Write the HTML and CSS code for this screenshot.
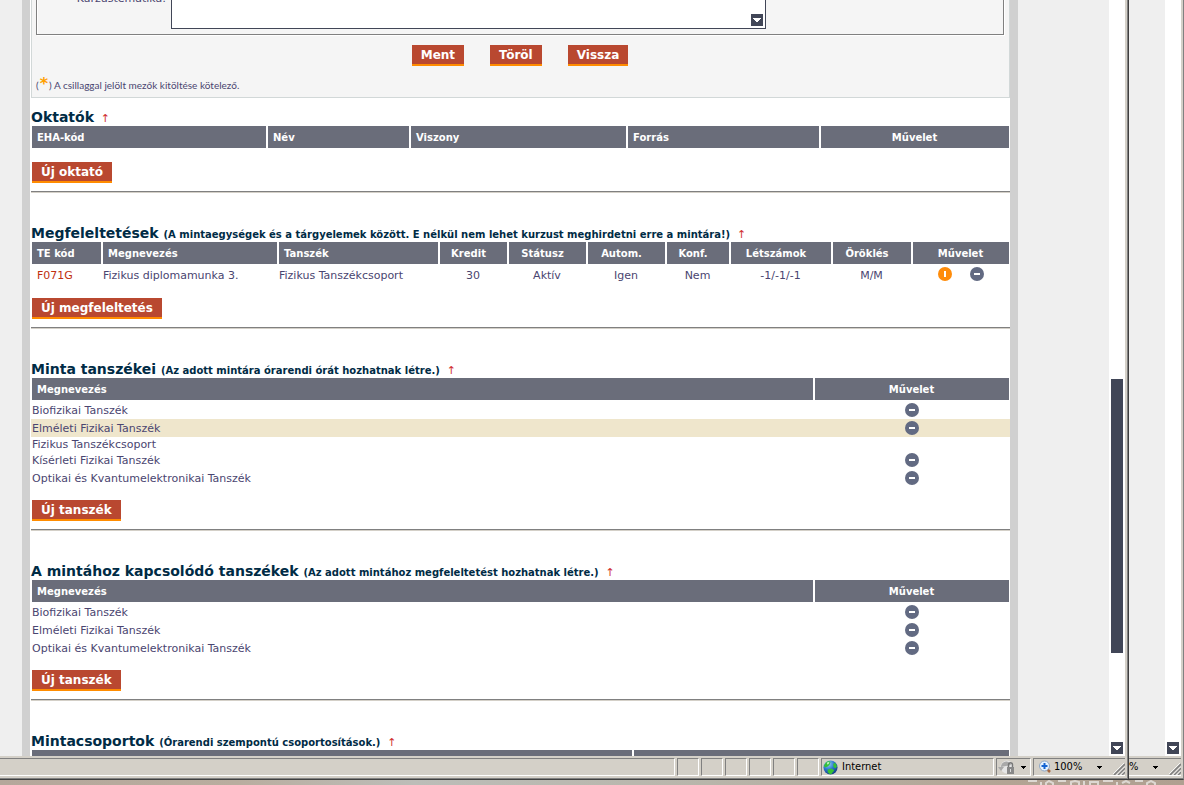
FILE: index.html
```html
<!DOCTYPE html>
<html lang="hu">
<head>
<meta charset="utf-8">
<title>Minta szerkesztése</title>
<link rel="stylesheet" href="styles.css">
</head>
<body>
<svg class="defs" aria-hidden="true">
  <symbol id="minus" viewBox="0 0 14 14"><circle cx="7" cy="7" r="7" fill="#626a82"/><path d="M4 6h6v2H4z" fill="#fff"/></symbol>
  <symbol id="bar" viewBox="0 0 14 14"><circle cx="7" cy="7" r="7" fill="#ff8c0a"/><path d="M6 4h2v6H6z" fill="#fff"/></symbol>
  <symbol id="down" viewBox="0 0 12 12"><path d="M0 0h12v12H0z" fill="#414657"/><path d="M2 4h8v1H9v1H8v1H7v1H5V7H4V6H3V5H2z" fill="#fff"/></symbol>
  <symbol id="caret" viewBox="0 0 5 3"><path d="M0 0h5v1H4v1H3v1H2V2H1V1H0z" fill="#000"/></symbol>
  <symbol id="grip" viewBox="0 0 12 12"><path d="M1 12 12 1M5 12l7-7M9 12l3-3" stroke="#808080" stroke-width="1.6"/><path d="M0 11 11 0M3.500 12 12 3.500M7.500 12 12 7.500" stroke="#fff" stroke-width=".8"/></symbol>
</svg>
<div class="windows">
  <div class="window window-main">
    <div class="view">
      <main class="page">
        <form class="panel">
          <div class="fields">
            <label for="prereq">Kurzustematika:</label>
            <div class="memo">
              <textarea id="prereq"></textarea>
              <svg class="memo-down"><use href="#down"/></svg>
            </div>
          </div>
          <div class="actions">
            <button type="button" class="btn">Ment</button>
            <button type="button" class="btn">Töröl</button>
            <button type="button" class="btn">Vissza</button>
          </div>
          <p class="note">(<span class="star">*</span>) A csillaggal jelölt mezők kitöltése kötelező.</p>
        </form>

        <section>
          <h2>Oktatók <a href="#top">↑</a></h2>
          <table>
            <colgroup><col><col class="w143"><col class="w217"><col class="w193"><col class="w189"></colgroup>
            <thead><tr><th>EHA-kód</th><th>Név</th><th>Viszony</th><th>Forrás</th><th class="op">Művelet</th></tr></thead>
          </table>
          <button type="button" class="btn">Új oktató</button>
        </section>

        <section>
          <h2>Megfeleltetések <small>(A mintaegységek és a tárgyelemek között. E nélkül nem lehet kurzust meghirdetni erre a mintára!)</small> <a href="#top">↑</a></h2>
          <table class="matches">
            <colgroup><col class="w72"><col><col class="w161"><col class="w69"><col class="w79"><col class="w79"><col class="w64"><col class="w102"><col class="w80"><col class="w97"></colgroup>
            <thead><tr><th>TE kód</th><th>Megnevezés</th><th>Tanszék</th><th class="mid">Kredit</th><th class="mid">Státusz</th><th class="mid">Autom.</th><th class="mid">Konf.</th><th class="mid">Létszámok</th><th class="mid">Öröklés</th><th class="op">Művelet</th></tr></thead>
            <tbody><tr><td class="code"><a href="#f071g">F071G</a></td><td>Fizikus diplomamunka 3.</td><td>Fizikus Tanszékcsoport</td><td class="mid">30</td><td class="mid">Aktív</td><td class="mid">Igen</td><td class="mid">Nem</td><td class="mid">-1/-1/-1</td><td class="mid">M/M</td><td class="act"><div class="ops"><button type="button" class="icon" aria-label="Infó"><svg><use href="#bar"/></svg></button><button type="button" class="icon" aria-label="Törlés"><svg><use href="#minus"/></svg></button></div></td></tr></tbody>
          </table>
          <button type="button" class="btn">Új megfeleltetés</button>
        </section>

        <section>
          <h2>Minta tanszékei <small>(Az adott mintára órarendi órát hozhatnak létre.)</small> <a href="#top">↑</a></h2>
          <table class="list">
            <colgroup><col><col class="w195"></colgroup>
            <thead><tr><th>Megnevezés</th><th class="op">Művelet</th></tr></thead>
            <tbody>
              <tr><td>Biofizikai Tanszék</td><td class="act"><div class="ops"><button type="button" class="icon" aria-label="Törlés"><svg><use href="#minus"/></svg></button></div></td></tr>
              <tr class="hot"><td>Elméleti Fizikai Tanszék</td><td class="act"><div class="ops"><button type="button" class="icon" aria-label="Törlés"><svg><use href="#minus"/></svg></button></div></td></tr>
              <tr class="plain"><td>Fizikus Tanszékcsoport</td><td></td></tr>
              <tr><td>Kísérleti Fizikai Tanszék</td><td class="act"><div class="ops"><button type="button" class="icon" aria-label="Törlés"><svg><use href="#minus"/></svg></button></div></td></tr>
              <tr><td>Optikai és Kvantumelektronikai Tanszék</td><td class="act"><div class="ops"><button type="button" class="icon" aria-label="Törlés"><svg><use href="#minus"/></svg></button></div></td></tr>
            </tbody>
          </table>
          <button type="button" class="btn">Új tanszék</button>
        </section>

        <section>
          <h2>A mintához kapcsolódó tanszékek <small>(Az adott mintához megfeleltetést hozhatnak létre.)</small> <a href="#top">↑</a></h2>
          <table class="list">
            <colgroup><col><col class="w195"></colgroup>
            <thead><tr><th>Megnevezés</th><th class="op">Művelet</th></tr></thead>
            <tbody>
              <tr><td>Biofizikai Tanszék</td><td class="act"><div class="ops"><button type="button" class="icon" aria-label="Törlés"><svg><use href="#minus"/></svg></button></div></td></tr>
              <tr><td>Elméleti Fizikai Tanszék</td><td class="act"><div class="ops"><button type="button" class="icon" aria-label="Törlés"><svg><use href="#minus"/></svg></button></div></td></tr>
              <tr><td>Optikai és Kvantumelektronikai Tanszék</td><td class="act"><div class="ops"><button type="button" class="icon" aria-label="Törlés"><svg><use href="#minus"/></svg></button></div></td></tr>
            </tbody>
          </table>
          <button type="button" class="btn">Új tanszék</button>
        </section>

        <section>
          <h2>Mintacsoportok <small>(Órarendi szempontú csoportosítások.)</small> <a href="#top">↑</a></h2>
          <table>
            <colgroup><col><col class="w376"></colgroup>
            <thead><tr><th></th><th></th></tr></thead>
          </table>
        </section>
      </main>
      <div class="scroll">
        <div class="track"><div class="thumb"></div></div>
        <svg class="step"><use href="#down"/></svg>
      </div>
    </div>
    <footer class="status">
      <div class="pane grow"></div>
      <div class="pane slot"></div><div class="pane slot"></div><div class="pane slot"></div><div class="pane slot"></div><div class="pane slot"></div><div class="pane slot"></div>
      <div class="pane zone">
        <svg class="globe" viewBox="0 0 16 16"><defs><radialGradient id="sea" cx=".35" cy=".25" r=".8"><stop offset="0" stop-color="#9bd0f5"/><stop offset=".5" stop-color="#2b78d0"/><stop offset="1" stop-color="#123a80"/></radialGradient></defs><circle cx="8" cy="8" r="7.500" fill="url(#sea)"/><path d="M3 3c2-2 4-2 5-1l-1 3-2 2-3 1-1-2zM11 4l2-1 2 4-2 2-2-2zM5 10l4-1 3 2-3 4H7l-2-2z" fill="#35c136"/><path d="M4 3l2-1 1 1-2 2z" fill="#c9f7cf"/></svg>
        <span>Internet</span>
      </div>
      <div class="pane safe">
        <svg class="lock" viewBox="0 0 18 16"><circle cx="9" cy="8" r="6.500" fill="#e6e6e6"/><path d="M0 8h6L3 12zM3 8c0-6 8-8 10-2" fill="#a9a9a9"/><path d="M9 8h7v7H9z" fill="#888"/><path d="M10.500 8V6c0-3 4-3 4 0v2" fill="none" stroke="#777" stroke-width="1.500"/><path d="M12 10h1v3h-1z" fill="#ddd"/></svg>
        <svg class="caret"><use href="#caret"/></svg>
      </div>
      <div class="pane level">
        <svg class="lens" viewBox="0 0 12 14"><path d="m8 9 3 3" stroke="#a5673f" stroke-width="2.500"/><circle cx="5.500" cy="6" r="5" fill="#e4f2ff" stroke="#8fa6c4"/><path d="M4.500 3h2v2h2v2h-2v2h-2V7h-2V5h2z" fill="#1464d2"/></svg>
        <span>100%</span>
        <svg class="caret"><use href="#caret"/></svg>
        <svg class="grip"><use href="#grip"/></svg>
      </div>
    </footer>
  </div>
  <div class="window window-back">
    <div class="view">
      <div class="scroll">
        <div class="track"></div>
        <svg class="step"><use href="#down"/></svg>
      </div>
    </div>
    <footer class="status">
      <div class="pane level rest">
        <span>%</span>
        <svg class="caret"><use href="#caret"/></svg>
        <svg class="grip"><use href="#grip"/></svg>
      </div>
    </footer>
  </div>
</div>
<div class="desktop"><svg viewBox="0 0 140 5"><path d="M2 1h9M15 2v3M20 5V3l3-2 4 2v2M32 1h8M45 5V2l4-1 4 1v3M58 1v4M64 5V2h8v3M77 1h10M91 2v3M96 3l4-2 4 2M109 1h8M121 5V3l4-2 4 2v2" stroke="#ddd8d2" stroke-width="2" fill="none"/></svg></div>
</body>
</html>
```
FILE: styles.css
```css
* { box-sizing: border-box; }

body {
  margin: 0;
  height: 100vh;
  display: flex;
  flex-direction: column;
  overflow: hidden;
  background: #d4d0c8;
  color: #4a4570;
  font: 11px/14px "DejaVu Sans", Verdana, sans-serif;
}

svg { display: block; flex: none; }
.defs { position: absolute; width: 0; height: 0; }

.windows { flex: 1; min-height: 0; display: flex; }

.window {
  display: flex;
  flex-direction: column;
  min-width: 0;
  padding-right: 2px;
  padding-bottom: 2px;
  background: #d4d0c8;
  border-right: 1px solid #404040;
  border-bottom: 1px solid #404040;
  box-shadow: inset -1px -1px #808080;
}
.window-main { flex: 1; padding-right: 3px; }
.window-back { width: 55px; border-right-color: #808080; box-shadow: inset 0 -1px #808080; }

.view {
  flex: 1;
  min-height: 0;
  display: flex;
  justify-content: flex-end;
  overflow: hidden;
  background: #efefef;
}

.page {
  flex: 1;
  min-width: 0;
  margin: 0 91px 0 22px;
  padding-left: 1px;
  background: #fff;
  border: solid #d0d0d0;
  border-width: 0 8px;
}

.scroll {
  width: 16px;
  padding: 0 2px 2px;
  display: flex;
  flex-direction: column;
  background: #fff;
}
.track { flex: 1; display: grid; grid-template-rows: 379fr 274fr 89fr; }
.thumb { grid-row: 2; background: #414657; }
.step { width: 12px; height: 12px; }

/* form */
.panel {
  padding: 0 5px 5px 4px;
  background: #f5f5f5;
  border: 1px solid #d2d8d8;
  border-top: 0;
}
.fields {
  display: flex;
  margin-top: -20px;
  padding-right: 237px;
  padding-bottom: 5px;
  border: 1px solid #808080;
  border-top: 0;
  box-shadow: 1px 1px #fff, inset 1px 0 #fff;
}
.fields label { width: 134px; padding: 12px 5px 0 0; text-align: right; }
.memo { position: relative; flex: 1; }
.memo textarea {
  display: block;
  width: 100%;
  height: 49px;
  border: 1px solid #414657;
  background: #fff;
  resize: none;
}
.memo-down { position: absolute; right: 3px; bottom: 3px; width: 12px; height: 12px; }

.actions { display: flex; justify-content: center; gap: 26px; padding-top: 10px; }

.btn {
  height: 21px;
  padding: 1px 9px 0;
  border: 0;
  border-bottom: 2px solid #ff8c00;
  background: #b94830;
  color: #fff;
  font: bold 12px/18px "DejaVu Sans", Verdana, sans-serif;
}

.note {
  margin: 12px 0 0;
  font: 10px/14px Lato, "Noto Sans", sans-serif;
}
.star { padding: 0 1px; color: #ffa000; font: bold 16px/12px "DejaVu Sans", sans-serif; }

/* sections */
section {
  margin-bottom: 25px;
  padding-bottom: 9px;
  border-bottom: 1px solid #d4d0c8;
  background: linear-gradient(#808080, #808080) bottom / 100% 1px no-repeat;
}
.panel + section { margin-top: 4px; }
section > .btn { display: block; margin: 14px 0 0 1px; }

h2 {
  margin: 0;
  height: 24px;
  color: #002b45;
  font: bold 14px/30px "DejaVu Sans", Verdana, sans-serif;
  white-space: nowrap;
}
h2 small { font-size: 10px; }
h2 a { margin-left: 2px; color: #d03030; font-size: 11px; font-weight: normal; text-decoration: none; }

table {
  width: 100%;
  table-layout: fixed;
  border-spacing: 0;
}
th {
  height: 22px;
  padding: 2px 0 0 5px;
  background: #6a6d7a;
  border-right: 2px solid #fff;
  color: #fff;
  font: bold 10px/14px "DejaVu Sans", Verdana, sans-serif;
  text-align: left;
}
th:first-child { border-left: 1px solid #fff; }
th:last-child { border-right-width: 1px; }
th.mid { padding: 2px 10px 0 0; text-align: center; }
th.op { padding: 2px 1px 0 0; text-align: center; }

td { height: 18px; padding: 2px 0 0; white-space: nowrap; }
.matches td { height: 20px; padding-top: 3px; }
.list thead::after { content: ""; display: table-row; height: 1px; }
.list + .btn { margin-top: 13px; }
.list td { padding-left: 1px; }
.list .plain td { height: 14px; line-height: 12px; }
.hot td { background: #efe6cc; }
td.mid { padding-right: 3px; text-align: center; }
td.code { padding-left: 6px; }
.matches td.act, .list td.act { padding: 0 2px 0 0; }
.code a { color: #c03010; text-decoration: none; }

.ops { display: flex; justify-content: center; gap: 18px; }
.icon { width: 14px; height: 14px; padding: 0; border: 0; background: none; }
.icon svg { width: 14px; height: 14px; }

.w64 { width: 64px; }
.w69 { width: 69px; }
.w72 { width: 72px; }
.w79 { width: 79px; }
.w80 { width: 80px; }
.w97 { width: 97px; }
.w102 { width: 102px; }
.w143 { width: 143px; }
.w161 { width: 161px; }
.w189 { width: 189px; }
.w193 { width: 193px; }
.w195 { width: 195px; }
.w217 { width: 217px; }
.w376 { width: 376px; }

/* status bar */
.status {
  display: flex;
  gap: 2px;
  height: 21px;
  padding: 2px 0 1px;
  color: #000;
  font: 11px/14px "DejaVu Sans Condensed", Tahoma, sans-serif;
}
.pane {
  display: flex;
  align-items: center;
  height: 18px;
  border: 1px solid;
  border-color: #808080 #fff #fff #808080;
}
.grow { flex: 1; border-left: 0; }
.slot { width: 22px; }
.zone { width: 173px; gap: 4px; padding-left: 1px; }
.globe { width: 15px; height: 15px; }
.safe { width: 35px; gap: 5px; padding-left: 1px; }
.lock { width: 18px; height: 16px; }
.caret { width: 5px; height: 3px; }
.level { width: 92px; gap: 3px; padding-left: 5px; border-right: 0; }
.level .caret { margin-left: auto; }
.lens { width: 12px; height: 14px; }
.grip { width: 12px; height: 12px; margin-left: 8px; align-self: flex-end; }
.rest { flex: 1; padding-left: 0; border-left: 0; }

.desktop { height: 5px; background: linear-gradient(90deg, #b5a79b, #b9ad9f 20%, #bcbdb8 35%, #b8b5aa 60%, #b3a494 85%, #b0a091); }
.desktop svg { width: 140px; height: 5px; margin: 0 18px 0 auto; }
```
